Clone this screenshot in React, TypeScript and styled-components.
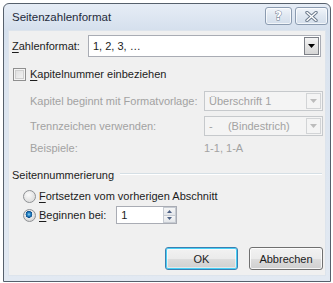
import React from 'react';
import styled, { createGlobalStyle, css } from 'styled-components';

const GlobalStyle = createGlobalStyle`
  html, body { margin: 0; padding: 0; background: #ffffff; }
  body { font-family: "Liberation Sans", Arial, sans-serif; font-size: 11px; }
`;

function Arrow({ color }: { color: string }) {
  return (
    <svg width="7" height="4" viewBox="0 0 7 4">
      <path d="M0 0 H7 L3.5 4 Z" fill={color} />
    </svg>
  );
}

function CloseGlyph() {
  return (
    <svg width="13" height="11" viewBox="0 0 13 11">
      <path d="M2 1.5 L11 9.5 M11 1.5 L2 9.5" stroke="#6f7d8f" strokeWidth="3.4" strokeLinecap="round" />
      <path d="M2 1.5 L11 9.5 M11 1.5 L2 9.5" stroke="#ffffff" strokeWidth="1.4" strokeLinecap="round" />
    </svg>
  );
}

function SpinArrow({ up }: { up?: boolean }) {
  return (
    <svg width="5" height="3" viewBox="0 0 5 3">
      <path d={up ? 'M0 3 H5 L2.5 0 Z' : 'M0 0 H5 L2.5 3 Z'} fill="#4d6185" />
    </svg>
  );
}

function Combo({ value, disabled }: { value: string; disabled?: boolean }) {
  return (
    <ComboBox disabled={disabled}>
      <ComboText disabled={disabled}>{value}</ComboText>
      <ArrowButton disabled={disabled}>
        <Arrow color={disabled ? '#bcbcbc' : '#000000'} />
      </ArrowButton>
    </ComboBox>
  );
}

export default function App() {
  return (
    <>
      <GlobalStyle />
      <Window>
        <TitleBar>
          <Title>Seitenzahlenformat</Title>
          <CaptionButtons>
            <CaptionButton width={27}><HelpGlyph>?</HelpGlyph></CaptionButton>
            <CaptionButton width={33}><CloseGlyph /></CaptionButton>
          </CaptionButtons>
        </TitleBar>
        <Client>
          <FormatRow>
            <Label><u>Z</u>ahlenformat:</Label>
            <Combo value="1, 2, 3, …" />
          </FormatRow>

          <CheckRow>
            <CheckBox />
            <Label><u>K</u>apitelnummer einbeziehen</Label>
          </CheckRow>

          <ChapterGrid>
            <Label disabled>Kapitel beginnt mit Formatvorlage:</Label>
            <Combo value="Überschrift 1" disabled />
            <Label disabled>Trennzeichen verwenden:</Label>
            <Combo value={'-\u00a0\u00a0\u00a0\u00a0\u00a0(Bindestrich)'} disabled />
            <Label disabled>Beispiele:</Label>
            <Label disabled>1-1, 1-A</Label>
          </ChapterGrid>

          <GroupHeader>
            <Label>Seitennummerierung</Label>
            <GroupLine />
          </GroupHeader>

          <RadioRow first>
            <Radio />
            <Label><u>F</u>ortsetzen vom vorherigen Abschnitt</Label>
          </RadioRow>
          <RadioRow>
            <Radio checked />
            <Label><u>B</u>eginnen bei:</Label>
            <SpinBox>
              <SpinText>1</SpinText>
              <SpinButtons>
                <SpinButton><SpinArrow up /></SpinButton>
                <SpinButton><SpinArrow /></SpinButton>
              </SpinButtons>
            </SpinBox>
          </RadioRow>

          <ButtonRow>
            <PushButton isDefault>OK</PushButton>
            <PushButton>Abbrechen</PushButton>
          </ButtonRow>
        </Client>
      </Window>
    </>
  );
}

const Window = styled.div`
  margin: 3px 0 0 3px;
  width: 328px;
  height: 279px;
  box-sizing: border-box;
  border: 1px solid #56606c;
  border-radius: 6px 6px 0 0;
  background: linear-gradient(#e6edf6, #d5e0ed 26px, #dbe4ef 60px, #e2e9f2);
  display: flex;
  flex-direction: column;
  overflow: hidden;
`;
const TitleBar = styled.div`
  height: 26px;
  display: flex;
  align-items: center;
  padding: 0 2px 0 8px;
  flex-shrink: 0;
`;
const Title = styled.div`
  flex: 1;
  font-size: 11.5px;
  color: #1f2b3b;
  padding-bottom: 1px;
`;
const CaptionButtons = styled.div`
  display: flex;
  gap: 3px;
  align-self: flex-start;
  margin-top: 3px;
`;
const CaptionButton = styled.div<{ width: number }>`
  width: ${p => p.width}px;
  height: 18px;
  box-sizing: border-box;
  border: 1px solid #8b9bb0;
  border-radius: 3px;
  background: linear-gradient(#f1f5fa, #dfe7f1 50%, #d3deeb);
  box-shadow: inset 0 0 0 1px rgba(255, 255, 255, 0.7);
  display: grid;
  place-items: center;
`;
const HelpGlyph = styled.span`
  font-family: "DejaVu Sans", sans-serif;
  font-weight: bold;
  font-size: 12px;
  line-height: 12px;
  color: #ffffff;
  -webkit-text-stroke: 1px #6f7d8f;
  paint-order: stroke fill;
`;
const Client = styled.div`
  flex: 1;
  margin: 0 4px 5px 4px;
  padding: 4px 2px 0 3px;
  background: #f0f0f0;
  border: 1px solid #dde4ec;
  display: flex;
  flex-direction: column;
  color: #1c1c1c;
`;
const Label = styled.span<{ disabled?: boolean }>`
  white-space: nowrap;
  color: ${p => (p.disabled ? '#a2a2a2' : '#1c1c1c')};
  u { text-underline-offset: 2px; }
`;
const FormatRow = styled.div`
  display: grid;
  grid-template-columns: 76px 1fr;
  align-items: center;
  height: 22px;
  margin-right: 2px;
`;
const ComboBox = styled.div<{ disabled?: boolean }>`
  height: 100%;
  box-sizing: border-box;
  display: flex;
  align-items: stretch;
  background: ${p => (p.disabled ? '#f4f4f4' : '#ffffff')};
  border: 1px solid ${p => (p.disabled ? '#c6c9cc' : '#a9acb4')};
  padding: 1px;
`;
const ComboText = styled.div<{ disabled?: boolean }>`
  flex: 1;
  display: flex;
  align-items: center;
  padding-left: 3px;
  white-space: pre;
  color: ${p => (p.disabled ? '#a2a2a2' : '#1c1c1c')};
`;
const ArrowButton = styled.div<{ disabled?: boolean }>`
  width: 15px;
  box-sizing: border-box;
  display: grid;
  place-items: center;
  ${p => (p.disabled
    ? css`
      border: 1px solid #d2d4d6;
      background: #f4f4f4;
    `
    : css`
      border: 1px solid #7d8087;
      background: linear-gradient(#f4f4f4, #e4e4e4 50%, #d6d6d6);
    `)}
`;
const CheckRow = styled.div`
  display: flex;
  align-items: center;
  gap: 4px;
  height: 16px;
  margin-top: 9px;
  padding-left: 1px;
`;
const CheckBox = styled.div`
  width: 13px;
  height: 13px;
  box-sizing: border-box;
  border: 1px solid #8f8f8f;
  background: linear-gradient(135deg, #dcdcdc, #f6f6f6);
  box-shadow: inset 0 0 0 1px #f4f4f4, inset 0 0 0 2px #cfcfcf;
`;
const ChapterGrid = styled.div`
  display: grid;
  grid-template-columns: 174px 1fr;
  grid-template-rows: 20px 20px 16px;
  row-gap: 5px;
  align-items: center;
  margin-top: 9px;
  padding-left: 18px;
  ${ComboBox} { height: 20px; }
  & > :nth-child(5), & > :nth-child(6) { margin-top: -2px; }
`;
const GroupHeader = styled.div`
  display: flex;
  align-items: center;
  gap: 6px;
  height: 16px;
  margin-top: 10px;
  margin-right: 1px;
`;
const GroupLine = styled.div`
  flex: 1;
  height: 0;
  border-top: 1px solid #d5dfe5;
  border-bottom: 1px solid #ffffff;
  margin-top: -2px;
`;
const RadioRow = styled.div<{ first?: boolean }>`
  display: flex;
  align-items: center;
  gap: 3px;
  height: ${p => (p.first ? 16 : 18)}px;
  margin-top: ${p => (p.first ? 5 : 2)}px;
  padding-left: 11px;
`;
const Radio = styled.div<{ checked?: boolean }>`
  width: 13px;
  height: 13px;
  box-sizing: border-box;
  border-radius: 50%;
  border: 1px solid #8e9194;
  background: ${p => (p.checked
    ? 'radial-gradient(circle at 45% 40%, #9fd6f4 0, #2a8ccb 1.5px, #0f4f8f 3.2px, #ececec 3.6px, #d9d9d9 6px)'
    : 'radial-gradient(circle at 40% 35%, #fbfbfb 0, #e2e2e2 6px)')};
`;
const SpinBox = styled.div`
  margin-left: 7px;
  width: 61px;
  height: 18px;
  box-sizing: border-box;
  display: flex;
  border: 1px solid #a9acb4;
  background: #ffffff;
`;
const SpinText = styled.div`
  flex: 1;
  display: flex;
  align-items: center;
  padding-left: 4px;
`;
const SpinButtons = styled.div`
  width: 13px;
  display: flex;
  flex-direction: column;
`;
const SpinButton = styled.div`
  flex: 1;
  display: grid;
  place-items: center;
  border: 1px solid #c6cbd2;
  background: linear-gradient(#f6f6f6, #e3e6ea);
  & + & { border-top: none; }
`;
const ButtonRow = styled.div`
  margin-top: auto;
  margin-bottom: 5px;
  display: flex;
  justify-content: flex-end;
  gap: 11px;
`;
const PushButton = styled.div<{ isDefault?: boolean }>`
  width: ${p => (p.isDefault ? 73 : 74)}px;
  height: 23px;
  box-sizing: border-box;
  display: grid;
  place-items: center;
  border-radius: 3px;
  color: #1c1c1c;
  background: linear-gradient(#f2f2f2, #ebebeb 50%, #dddddd 51%, #cfcfcf);
  border: 1px solid ${p => (p.isDefault ? '#3c7fb1' : '#707070')};
  box-shadow: ${p => (p.isDefault
    ? 'inset 0 0 0 1px #48d0f6, inset 0 0 0 2px rgba(255,255,255,0.5)'
    : 'inset 0 0 0 1px rgba(255,255,255,0.8)')};
`;
